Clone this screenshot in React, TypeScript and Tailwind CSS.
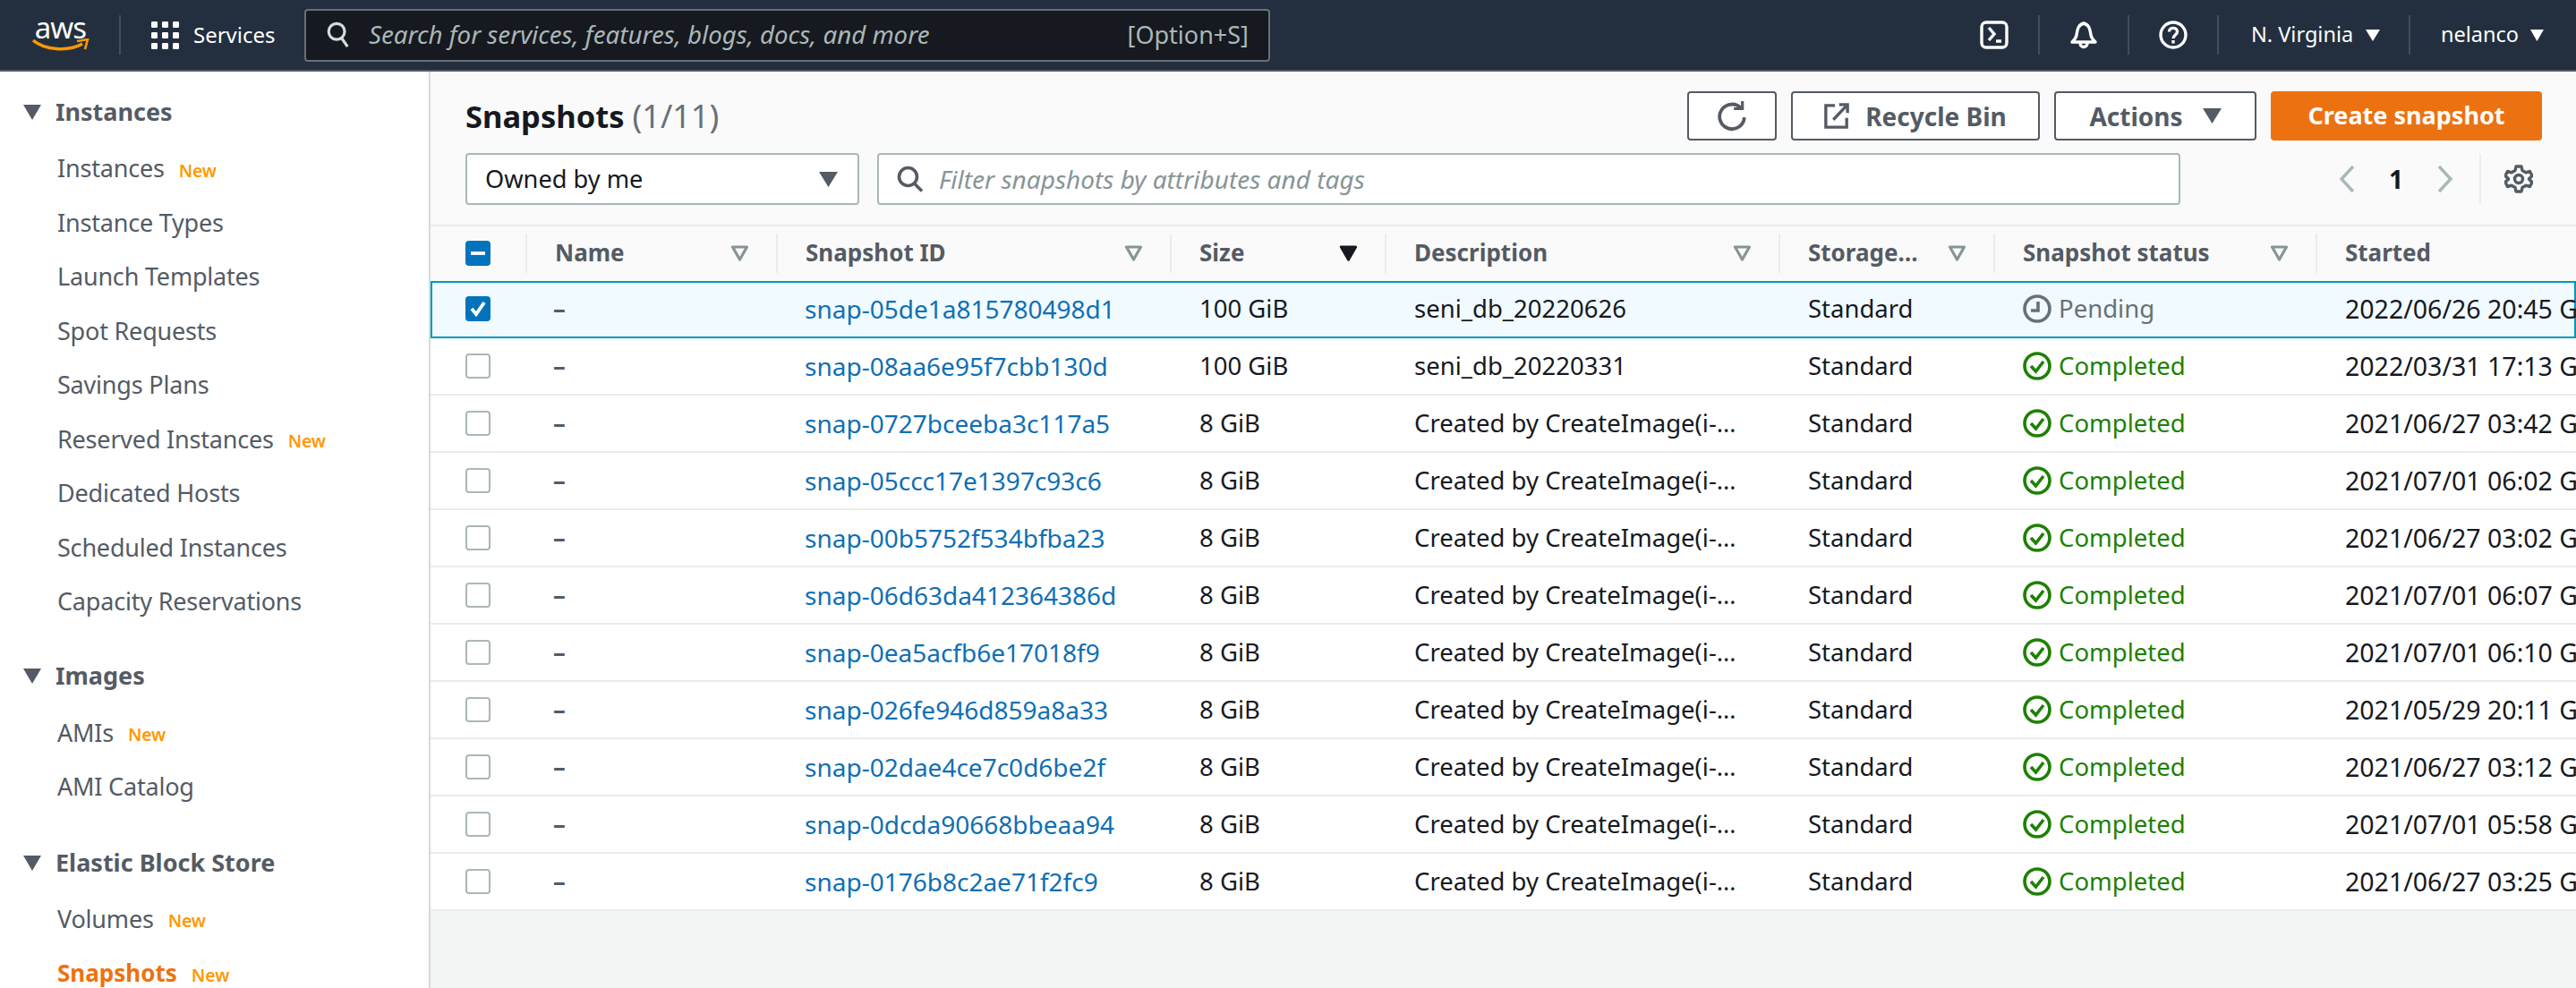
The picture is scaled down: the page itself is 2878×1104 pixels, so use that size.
import React from "react";

const Caret = ({ className = "" }: { className?: string }) => (
  <svg viewBox="0 0 20 16" preserveAspectRatio="none" className={className} fill="currentColor"><path d="M0 0 H20 L10 16 Z" /></svg>
);
const FilterTri = ({ filled = false }: { filled?: boolean }) => (
  <svg viewBox="0 0 20 18" className={filled ? "w-[21px] h-[18px] text-[#16191f] shrink-0" : "w-[21px] h-[18px] text-[#879596] shrink-0"}>
    <path d="M2 2 H18 L10 16 Z" fill={filled ? "currentColor" : "none"} stroke="currentColor" strokeWidth="3.2" strokeLinejoin="round" />
  </svg>
);
const Nav = () => (
  <header className="h-[80px] shrink-0 bg-[#232f3e] border-b-[2px] border-[#545b64] flex items-center text-white">
    <div className="w-[133px] shrink-0 flex flex-col items-center pl-[2px] -mt-[2px]">
      <span className="text-[33px] leading-[26px] tracking-[-1px]">aws</span>
      <svg viewBox="0 0 64 16" className="w-[64px] h-[16px] -mt-[1px]">
        <path d="M1 2 C 14 13, 40 15, 56 6" fill="none" stroke="#f90" strokeWidth="3.6" />
        <path d="M50 3 L62 1 L59 12" fill="none" stroke="#f90" strokeWidth="2.6" />
      </svg>
    </div>
    <div className="w-[2px] h-[44px] bg-[#414d5c] shrink-0" />
    <svg viewBox="0 0 32 32" className="w-[32px] h-[32px] ml-[33px] shrink-0" fill="#fff">
      {[1, 13, 25].map((x) => [1, 13, 25].map((y) => <rect key={`${x}-${y}`} x={x} y={y} width="7" height="7" rx="1.2" />))}
    </svg>
    <span className="ml-[16px] text-[24px] leading-none w-[124px] shrink-0">Services</span>
    <div className="w-[1079px] h-[59px] shrink-0 rounded-[4px] border-[2px] border-[#687078] bg-[#16191f] flex items-center pl-[22px] pr-[22px] text-[27px] text-[#aab7b8]">
      <svg viewBox="0 0 28 32" className="w-[28px] h-[30px] shrink-0" fill="none" stroke="#d5dbdb" strokeWidth="3.4">
        <circle cx="12" cy="12" r="9.5" /><path d="M18 20 L25 30" />
      </svg>
      <span className="ml-[20px] italic flex-1 text-[27.7px]">Search for services, features, blogs, docs, and more</span>
      <span>[Option+S]</span>
    </div>
    <div className="ml-auto flex items-center h-[44px] pr-[36px]">
      <div className="w-[100px] h-full flex items-center justify-center border-r-[2px] border-[#414d5c]">
        <svg viewBox="0 0 32 32" className="w-[32px] h-[32px]" fill="none" stroke="#fff" strokeWidth="3.4">
          <rect x="2" y="2" width="28" height="28" rx="5" /><path d="M10 8 L16 15 L10 22 M18 23 H24" />
        </svg>
      </div>
      <div className="w-[100px] h-full flex items-center justify-center border-r-[2px] border-[#414d5c]">
        <svg viewBox="0 0 32 32" className="w-[32px] h-[32px]" fill="none" stroke="#fff" strokeWidth="3.4" strokeLinejoin="round">
          <path d="M16 3 C 9 5, 9 11, 8 16 C 7.5 20, 5 22, 3 24 H29 C27 22, 24.5 20, 24 16 C23 11, 23 5, 16 3 Z" /><path d="M12 25 C12 31, 20 31, 20 25" />
        </svg>
      </div>
      <div className="w-[100px] h-full flex items-center justify-center border-r-[2px] border-[#414d5c]">
        <svg viewBox="0 0 32 32" className="w-[32px] h-[32px]" fill="none" stroke="#fff" strokeWidth="3.4">
          <circle cx="16" cy="16" r="14" /><path d="M11.5 12.5 C11.5 7, 20.5 7, 20.5 12.5 C20.5 16, 16 16, 16 20" /><path d="M16 22 V25.5" />
        </svg>
      </div>
      <div className="w-[214px] h-full flex items-center pl-[36px] border-r-[2px] border-[#414d5c] text-[23.5px]">
        <span>N. Virginia</span><Caret className="w-[16px] h-[13px] ml-[14px]" />
      </div>
      <div className="w-[149px] h-full flex items-center pl-[34px] text-[23.5px]">
        <span>nelanco</span><Caret className="w-[16px] h-[13px] ml-[13px]" />
      </div>
    </div>
  </header>
);

const New = () => <span className="ml-[16px] text-[19.5px] font-semibold text-[#ff9900] relative top-[2px]">New</span>;
const Item = ({ t, n, active }: { t: string; n?: boolean; active?: boolean }) => (
  <div className={active ? "h-[60.5px] pl-[64px] flex items-center text-[26px] font-bold text-[#ec7211]" : "h-[60.5px] pl-[64px] flex items-center text-[27px] tracking-[-0.2px] text-[#545b64]"}>
    <span>{t}</span>{n && <New />}
  </div>
);
const Group = ({ t }: { t: string }) => (
  <div className="h-[60px] pl-[26px] flex items-center text-[27px] font-bold text-[#545b64]">
    <Caret className="w-[20px] h-[17px] mr-[16px] shrink-0" /><span>{t}</span>
  </div>
);
const Sidebar = () => (
  <aside className="w-[481px] shrink-0 bg-white border-r-[2px] border-[#d5dbdb] pt-[15px] overflow-hidden">
    <Group t="Instances" />
    <div className="mt-[3px] mb-[23px]">
      {[["Instances", 1], ["Instance Types"], ["Launch Templates"], ["Spot Requests"], ["Savings Plans"], ["Reserved Instances", 1], ["Dedicated Hosts"], ["Scheduled Instances"], ["Capacity Reservations"]].map((r) => (
        <Item key={r[0] as string} t={r[0] as string} n={!!r[1]} />
      ))}
    </div>
    <Group t="Images" />
    <div className="mt-[3px] mb-[25px]">
      <Item t="AMIs" n /><Item t="AMI Catalog" />
    </div>
    <Group t="Elastic Block Store" />
    <div className="mt-[2px]">
      <Item t="Volumes" n /><Item t="Snapshots" n active />
    </div>
  </aside>
);

const Btn = ({ children, className = "" }: { children: React.ReactNode; className?: string }) => (
  <div className={`h-[55px] rounded-[4px] border-[2px] border-[#545b64] bg-white flex items-center justify-center text-[28px] font-bold text-[#545b64] ${className}`}>{children}</div>
);

const Toolbar = () => (
  <div className="h-[171px] shrink-0 pt-[22px] pr-[38px] pl-[39px] bg-[#fafafa] flex flex-col gap-[14px]">
    <div className="flex items-center h-[55px]">
      <h1 className="text-[34.5px] font-bold text-[#16191f] leading-none">Snapshots <span className="text-[36px] font-normal text-[#687078]">(1/11)</span></h1>
      <div className="ml-auto flex gap-[16px]">
        <Btn className="w-[100px]">
          <svg viewBox="0 0 32 32" className="w-[34px] h-[34px]" fill="none" stroke="#545b64" strokeWidth="3.6">
            <path d="M26 8 A13 13 0 1 0 29 17" /><path d="M18 8 H27 V0" strokeWidth="3" />
          </svg>
        </Btn>
        <Btn className="w-[278px]">
          <svg viewBox="0 0 30 32" className="w-[28px] h-[30px] mr-[18px]" fill="none" stroke="#545b64" strokeWidth="3.6">
            <path d="M13 3 H2 V29 H27 V18" /><path d="M11 20 L26 4 M18 2 H28 V12" />
          </svg>
          Recycle Bin
        </Btn>
        <Btn className="w-[226px]">Actions<Caret className="w-[21px] h-[17px] ml-[22px]" /></Btn>
        <div className="w-[303px] h-[55px] rounded-[4px] bg-[#ec7211] text-white flex items-center justify-center text-[27px] font-bold">Create snapshot</div>
      </div>
    </div>
    <div className="flex items-center h-[58px]">
      <div className="w-[440px] h-full rounded-[4px] border-[2px] border-[#aab7b8] bg-white flex items-center pl-[20px] pr-[22px] text-[27.2px] text-[#16191f]">
        <span className="flex-1">Owned by me</span><Caret className="w-[21px] h-[17px] text-[#545b64]" />
      </div>
      <div className="ml-[20px] w-[1456px] h-full rounded-[4px] border-[2px] border-[#aab7b8] bg-white flex items-center pl-[20px] text-[28px] italic text-[#879596]">
        <svg viewBox="0 0 30 30" className="w-[30px] h-[30px] mr-[17px]" fill="none" stroke="#545b64" strokeWidth="3.6">
          <circle cx="12.5" cy="12.5" r="10" /><path d="M19.5 20 L28 28.5" />
        </svg>
        Filter snapshots by attributes and tags
      </div>
      <div className="ml-auto flex items-center h-full">
        <svg viewBox="0 0 20 32" className="w-[20px] h-[32px]" fill="none" stroke="#aab7b8" strokeWidth="3.4"><path d="M17 2 L4 16 L17 30" /></svg>
        <span className="w-[90px] text-center text-[28px] font-bold text-[#16191f] leading-none">1</span>
        <svg viewBox="0 0 20 32" className="w-[20px] h-[32px]" fill="none" stroke="#aab7b8" strokeWidth="3.4"><path d="M3 2 L16 16 L3 30" /></svg>
        <div className="w-[2px] h-[56px] bg-[#eaeded] ml-[28px]" />
        <svg viewBox="0 0 32 32" className="w-[32px] h-[32px] ml-[26px] mr-[10px]" fill="none" stroke="#545b64" strokeWidth="3.4">
          <circle cx="16" cy="16" r="4.5" />
          <path d="M13 2 H19 L20 6.5 L24 8.8 L28.5 7.5 L31 12.5 L27.5 15.8 V16.2 L31 19.5 L28.5 24.5 L24 23.2 L20 25.5 L19 30 H13 L12 25.5 L8 23.2 L3.5 24.5 L1 19.5 L4.5 16.2 V15.8 L1 12.5 L3.5 7.5 L8 8.8 L12 6.5 Z" strokeLinejoin="round" />
        </svg>
      </div>
    </div>
  </div>
);

const cols = "grid grid-cols-[106px_280px_440px_240px_440px_240px_360px_560px]";
const HCell = ({ t, f, sort }: { t: string; f?: boolean; sort?: boolean }) => (
  <div className="h-[44px] flex items-center pl-[31px] pr-[30px] border-l-[2px] border-[#eaeded] text-[26px] font-bold text-[#545b64]">
    <span className="flex-1 whitespace-nowrap">{t}</span>
    {f && <FilterTri />}
    {sort && <FilterTri filled />}
  </div>
);

const CheckBox = ({ state }: { state: "none" | "on" | "mixed" }) => {
  if (state === "none") return <div className="w-[28px] h-[28px] rounded-[4px] border-[2px] border-[#aab7b8] bg-white" />;
  return (
    <div className="w-[28px] h-[28px] rounded-[4px] bg-[#0073bb] flex items-center justify-center">
      <svg viewBox="0 0 28 28" className="w-[28px] h-[28px]" fill="none" stroke="#fff" strokeWidth="3.8">
        {state === "on" ? <path d="M7 14 L12 20 L21 7" /> : <path d="M6 14 H22" />}
      </svg>
    </div>
  );
};

const rows = [
  ["snap-05de1a815780498d1", "100 GiB", "seni_db_20220626", "2022/06/26 20:45 GMT+9"],
  ["snap-08aa6e95f7cbb130d", "100 GiB", "seni_db_20220331", "2022/03/31 17:13 GMT+9"],
  ["snap-0727bceeba3c117a5", "8 GiB", "Created by CreateImage(i-…", "2021/06/27 03:42 GMT+9"],
  ["snap-05ccc17e1397c93c6", "8 GiB", "Created by CreateImage(i-…", "2021/07/01 06:02 GMT+9"],
  ["snap-00b5752f534bfba23", "8 GiB", "Created by CreateImage(i-…", "2021/06/27 03:02 GMT+9"],
  ["snap-06d63da412364386d", "8 GiB", "Created by CreateImage(i-…", "2021/07/01 06:07 GMT+9"],
  ["snap-0ea5acfb6e17018f9", "8 GiB", "Created by CreateImage(i-…", "2021/07/01 06:10 GMT+9"],
  ["snap-026fe946d859a8a33", "8 GiB", "Created by CreateImage(i-…", "2021/05/29 20:11 GMT+9"],
  ["snap-02dae4ce7c0d6be2f", "8 GiB", "Created by CreateImage(i-…", "2021/06/27 03:12 GMT+9"],
  ["snap-0dcda90668bbeaa94", "8 GiB", "Created by CreateImage(i-…", "2021/07/01 05:58 GMT+9"],
  ["snap-0176b8c2ae71f2fc9", "8 GiB", "Created by CreateImage(i-…", "2021/06/27 03:25 GMT+9"],
];

const Status = ({ pending }: { pending: boolean }) =>
  pending ? (
    <span className="flex items-center text-[#687078]">
      <svg viewBox="0 0 32 32" className="w-[32px] h-[32px] mr-[8px]" fill="none" stroke="#687078" strokeWidth="3.6"><circle cx="16" cy="16" r="14" /><path d="M17 8 V18 H9" /></svg>
      Pending
    </span>
  ) : (
    <span className="flex items-center text-[#1d8102]">
      <svg viewBox="0 0 32 32" className="w-[32px] h-[32px] mr-[8px]" fill="none" stroke="#1d8102" strokeWidth="3.6"><circle cx="16" cy="16" r="14" /><path d="M9 16 L14.5 22 L23 11" /></svg>
      Completed
    </span>
  );

const Row = ({ r, i }: { r: string[]; i: number }) => {
  const sel = i === 0;
  return (
    <div className={sel ? `${cols} h-[64px] pb-[2px] items-center bg-[#f1faff] shadow-[inset_0_0_0_2px_#0099b8] text-[27.5px] text-[#16191f] whitespace-nowrap` : `${cols} h-[64px] items-center bg-white border-b-[2px] border-[#eaeded] text-[27.5px] text-[#16191f] whitespace-nowrap`}>
      <div className="pl-[39px]"><CheckBox state={sel ? "on" : "none"} /></div>
      <div className="pl-[31px] text-[#545b64] font-bold">–</div>
      <div className="pl-[32px] text-[28px] text-[#0f6fb4]">{r[0]}</div>
      <div className="pl-[33px]">{r[1]}</div>
      <div className="pl-[33px]">{r[2]}</div>
      <div className="pl-[33px]">Standard</div>
      <div className="pl-[33px]"><Status pending={sel} /></div>
      <div className="pl-[33px] text-[28.5px]">{r[3]}</div>
    </div>
  );
};

export default function App() {
  return (
    <div className="w-[2878px] h-[1104px] flex flex-col overflow-hidden bg-[#f2f3f3] font-['Noto_Sans',sans-serif]">
      <Nav />
      <div className="flex-1 flex min-h-0">
        <Sidebar />
        <main className="flex-1 min-w-0 flex flex-col overflow-hidden">
          <Toolbar />
          <div className={`${cols} h-[63px] shrink-0 items-center bg-[#fafafa] border-t-[2px] border-[#eaeded] pb-[2px]`}>
            <div className="pl-[39px]"><CheckBox state="mixed" /></div>
            <HCell t="Name" f />
            <HCell t="Snapshot ID" f />
            <HCell t="Size" sort />
            <HCell t="Description" f />
            <HCell t="Storage…" f />
            <HCell t="Snapshot status" f />
            <HCell t="Started" />
          </div>
          <div>{rows.map((r, i) => <Row key={r[0]} r={r} i={i} />)}</div>
        </main>
      </div>
    </div>
  );
}
